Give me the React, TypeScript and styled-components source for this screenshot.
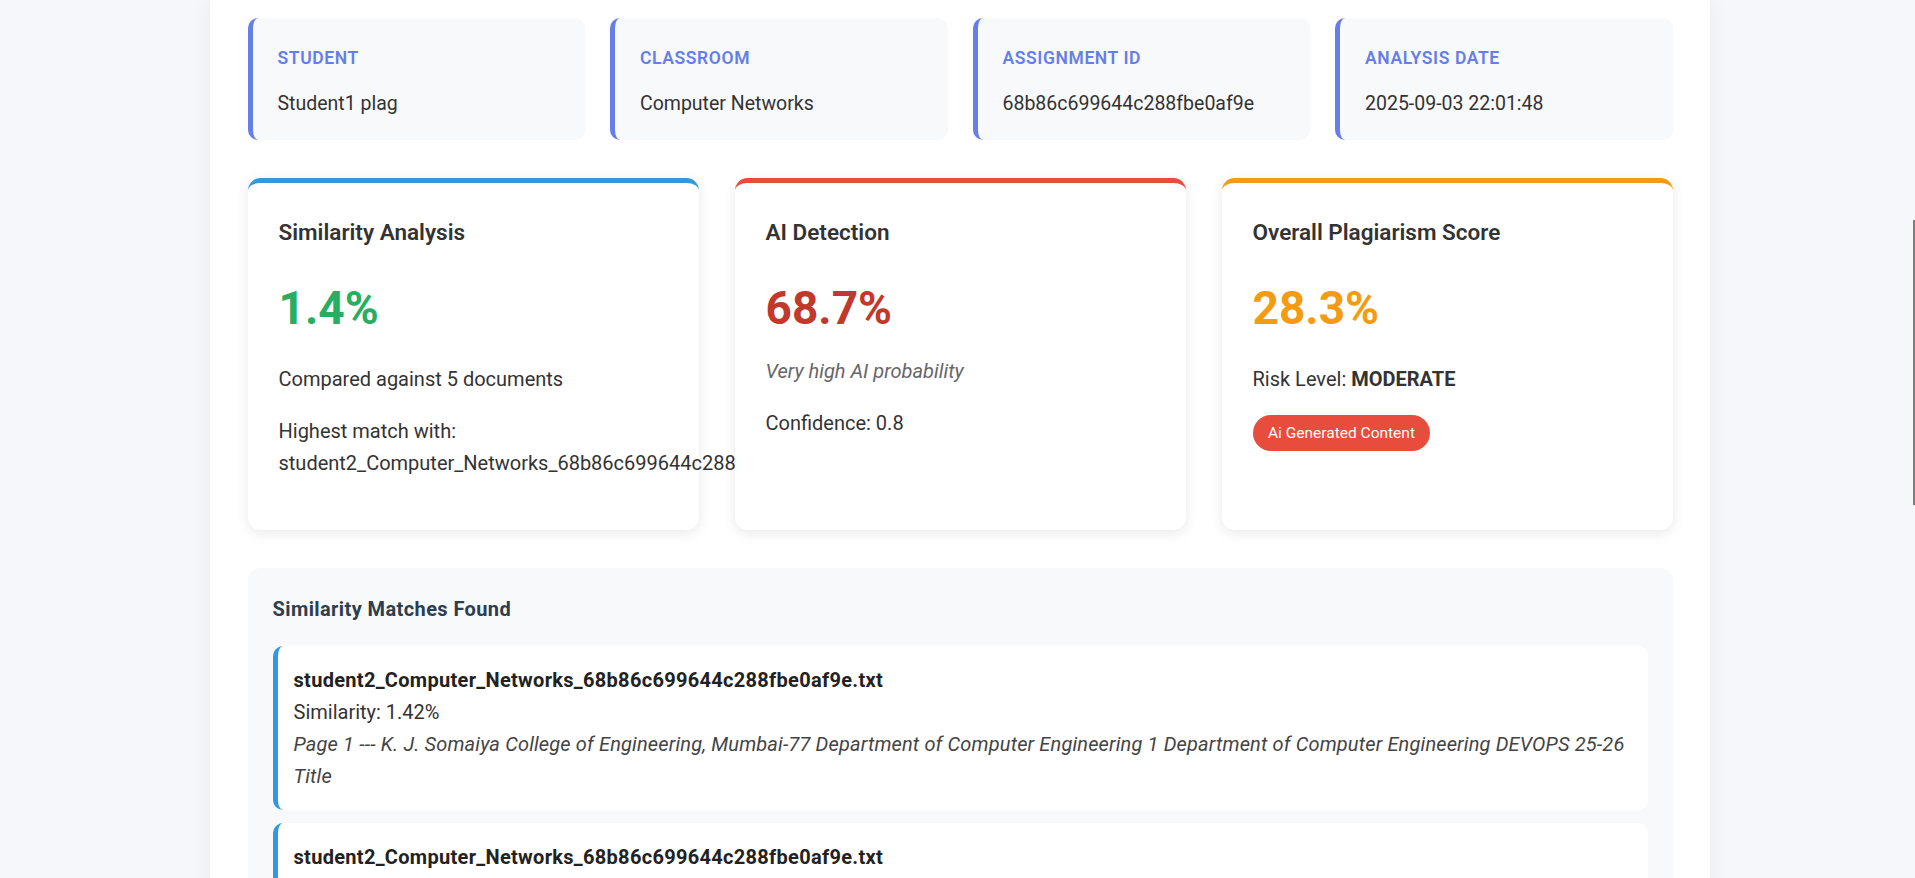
import styled, { createGlobalStyle } from "styled-components";

const GlobalStyle = createGlobalStyle`
  html, body {
    margin: 0;
    padding: 0;
  }
  body {
    background: #f5f7fa;
    font-family: Roboto, "Open Sans", Arial, sans-serif;
    color: #333;
  }
`;

type TInfo = { label: string; value: string };

const info: TInfo[] = [
  { label: "Student", value: "Student1 plag" },
  { label: "Classroom", value: "Computer Networks" },
  { label: "Assignment ID", value: "68b86c699644c288fbe0af9e" },
  { label: "Analysis Date", value: "2025-09-03 22:01:48" },
];

const fileName = "student2_Computer_Networks_68b86c699644c288fbe0af9e.txt";
const excerpt =
  "Page 1 --- K. J. Somaiya College of Engineering, Mumbai-77 Department of Computer Engineering 1 Department of Computer Engineering DEVOPS 25-26 Title";

const matches = [
  { file: fileName, similarity: "1.42%", text: excerpt },
  { file: fileName, similarity: "0.98%", text: excerpt },
];

const App = () => {
  return (
    <Page>
      <GlobalStyle />
      <Container>
        <InfoGrid>
          {info.map((item) => (
            <InfoCard key={item.label}>
              <InfoLabel>{item.label}</InfoLabel>
              <InfoValue>{item.value}</InfoValue>
            </InfoCard>
          ))}
        </InfoGrid>

        <ScoreGrid>
          <ScoreCard accent="#3498db">
            <CardTitle>Similarity Analysis</CardTitle>
            <BigNumber color="#27ae60">1.4%</BigNumber>
            <Text>Compared against 5 documents</Text>
            <Text>Highest match with: {fileName}</Text>
          </ScoreCard>

          <ScoreCard accent="#e74c3c">
            <CardTitle>AI Detection</CardTitle>
            <BigNumber color="#c0392b">68.7%</BigNumber>
            <AiNote>Very high AI probability</AiNote>
            <Text>Confidence: 0.8</Text>
          </ScoreCard>

          <ScoreCard accent="#f39c12">
            <CardTitle>Overall Plagiarism Score</CardTitle>
            <BigNumber color="#f39c12">28.3%</BigNumber>
            <Text>
              Risk Level: <strong>MODERATE</strong>
            </Text>
            <Badge>Ai Generated Content</Badge>
          </ScoreCard>
        </ScoreGrid>

        <MatchesSection>
          <SectionTitle>Similarity Matches Found</SectionTitle>
          {matches.map((match, i) => (
            <MatchItem key={i}>
              <MatchFile>{match.file}</MatchFile>
              <MatchLine>Similarity: {match.similarity}</MatchLine>
              <MatchExcerpt>{match.text}</MatchExcerpt>
            </MatchItem>
          ))}
        </MatchesSection>
      </Container>
      <ScrollThumb />
    </Page>
  );
};

const Page = styled.div`
  min-height: 100vh;
  padding-left: 5px;
`;

const Container = styled.div`
  width: 1500px;
  margin: 0 auto;
  box-sizing: border-box;
  padding: 18px 37.5px 40px;
  background: #fff;
  box-shadow: 0 0 20px rgba(0, 0, 0, 0.06);
`;

const InfoGrid = styled.div`
  display: grid;
  grid-template-columns: repeat(4, minmax(0, 1fr));
  gap: 25px;
  margin-bottom: 37.5px;
`;

const InfoCard = styled.div`
  background: #f8f9fa;
  border-left: 5px solid #667eea;
  border-radius: 10px;
  padding: 26px 25px 21.5px;
`;

const InfoLabel = styled.div`
  font-size: 17.5px;
  font-weight: 600;
  line-height: 1.6;
  color: #667eea;
  text-transform: uppercase;
  letter-spacing: 0.6px;
  margin-bottom: 15.5px;
`;

const InfoValue = styled.div`
  font-size: 19.5px;
  line-height: 1.6;
  color: #333;
`;

const ScoreGrid = styled.div`
  display: grid;
  grid-template-columns: repeat(3, minmax(0, 1fr));
  gap: 36px;
  margin-bottom: 38px;
`;

type TAccent = { accent: string };

const ScoreCard = styled.div<TAccent>`
  position: relative;
  background: #fff;
  border-radius: 12.5px;
  border-top: 5px solid ${({ accent }) => accent};
  padding: 31px;
  box-shadow: 0 3px 14px rgba(0, 0, 0, 0.09);
`;

const CardTitle = styled.h3`
  margin: 0 0 22.5px;
  font-size: 22.5px;
  font-weight: 600;
  line-height: 1.6;
  color: #333;
`;

const BigNumber = styled.div<{ color: string }>`
  margin-bottom: 17.5px;
  font-size: 46px;
  font-weight: 700;
  line-height: 1.6;
  color: ${({ color }) => color};
`;

const Text = styled.p`
  margin: 0 0 20px;
  font-size: 20px;
  line-height: 1.6;
  color: #333;

  strong {
    font-weight: 700;
  }
`;

const AiNote = styled(Text)`
  margin-top: -8px;
  font-style: italic;
  color: #666;
`;

const Badge = styled.span`
  display: inline-block;
  padding: 8px 15.5px;
  border-radius: 18px;
  background: #e74c3c;
  color: #fff;
  font-size: 15.5px;
  line-height: 20px;
`;

const MatchesSection = styled.div`
  background: #f8f9fa;
  border-radius: 12.5px;
  padding: 25px;
`;

const SectionTitle = styled.h4`
  margin: 0 0 20.5px;
  font-size: 20px;
  font-weight: 700;
  line-height: 1.6;
  letter-spacing: 0.4px;
  color: #2c3e50;
`;

const MatchItem = styled.div`
  background: #fff;
  border-left: 5px solid #3498db;
  border-radius: 10px;
  padding: 18px 16px;
  margin-bottom: 13.5px;
  font-size: 20px;
  line-height: 1.6;
  color: #333;
`;

const MatchFile = styled.div`
  font-weight: 700;
  letter-spacing: 0.3px;
  color: #222;
`;

const MatchLine = styled.div`
  color: #333;
`;

const MatchExcerpt = styled.div`
  font-style: italic;
  letter-spacing: 0.15px;
  color: #444;
`;

const ScrollThumb = styled.div`
  position: fixed;
  top: 220px;
  right: 0;
  width: 2px;
  height: 285px;
  background: #7d7d7d;
`;

export default App;
